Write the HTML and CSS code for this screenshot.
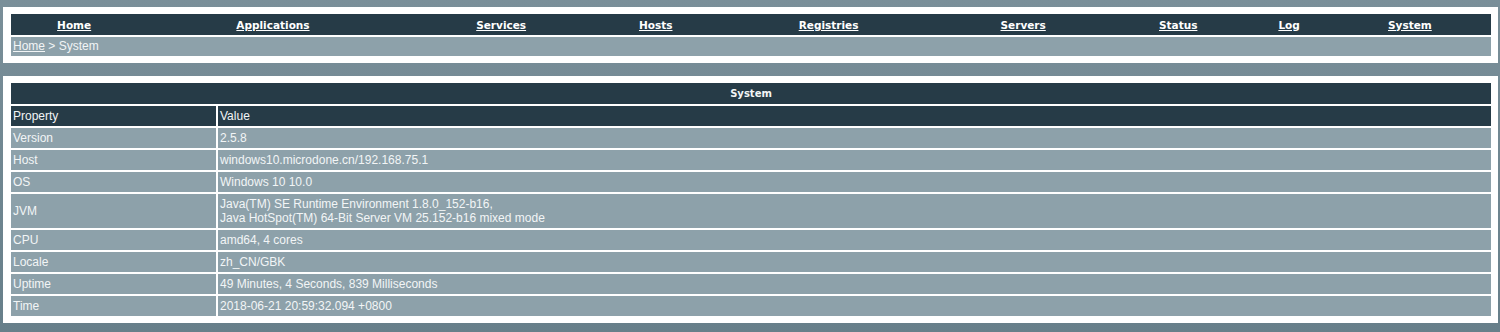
FILE: index.html
```html
<!DOCTYPE html>
<html lang="en">
  <head>
    <meta charset="UTF-8" />
    <title>Dubbo Monitor - System</title>
    <link rel="stylesheet" href="styles.css">
  </head>
  <body>
    <div class="panel">
      <table class="nav">
        <tr class="menu">
          <td><a href="#">Home</a></td>
          <td><a href="#">Applications</a></td>
          <td><a href="#">Services</a></td>
          <td><a href="#">Hosts</a></td>
          <td><a href="#">Registries</a></td>
          <td><a href="#">Servers</a></td>
          <td><a href="#">Status</a></td>
          <td><a href="#">Log</a></td>
          <td><a href="#">System</a></td>
        </tr>
        <tr>
          <td class="crumb" colspan="9"><a href="#">Home</a> &gt; System</td>
        </tr>
      </table>
    </div>

    <div class="panel">
      <table class="list">
        <tr>
          <th class="title" colspan="2">System</th>
        </tr>
        <tr class="head">
          <td class="key">Property</td>
          <td>Value</td>
        </tr>
        <tr><td>Version</td><td>2.5.8</td></tr>
        <tr><td>Host</td><td>windows10.microdone.cn/192.168.75.1</td></tr>
        <tr><td>OS</td><td>Windows 10 10.0</td></tr>
        <tr>
          <td>JVM</td>
          <td>Java(TM) SE Runtime Environment 1.8.0_152-b16,<br />Java HotSpot(TM) 64-Bit Server VM 25.152-b16 mixed mode</td>
        </tr>
        <tr><td>CPU</td><td>amd64, 4 cores</td></tr>
        <tr><td>Locale</td><td>zh_CN/GBK</td></tr>
        <tr><td>Uptime</td><td>49 Minutes, 4 Seconds, 839 Milliseconds</td></tr>
        <tr><td>Time</td><td>2018-06-21 20:59:32.094 +0800</td></tr>
      </table>
    </div>
  </body>
</html>
```

FILE: styles.css
```css
body {
  margin: 0;
  padding: 7px 2px 9px 3px;
  background: linear-gradient(180deg, #7a8f99 0%, #677f8a 100%);
  font-family: "Liberation Sans", Arial, sans-serif;
  font-size: 12px;
  color: #f2f5f6;
}

.panel {
  background: #fff;
  padding: 7px 7px 7px 8px;
  margin-bottom: 13px;
}

.panel:last-child {
  margin-bottom: 0;
}

table {
  width: 100%;
  border-collapse: separate;
  border-spacing: 0;
}

td,
th {
  padding: 0;
}

a {
  color: #fff;
}

/* top menu */
.menu td {
  background: #263b47;
  height: 21px;
  text-align: center;
  font-family: "DejaVu Sans", Verdana, sans-serif;
  font-weight: bold;
  font-size: 10.5px;
}

.crumb {
  background: #8da1aa;
  border-top: 2px solid #fff;
  height: 19px;
  padding-left: 2px;
  line-height: 19px;
}

.crumb a {
  color: #f2f5f6;
}

/* system table */
.list td,
.list th {
  line-height: 14px;
  padding: 3px 2px;
  background: #8da1aa;
  border-top: 2px solid #fff;
  text-align: left;
  vertical-align: middle;
}

.list td + td {
  border-left: 2px solid #fff;
}

.list .title {
  background: #263b47;
  border-top: 0;
  height: 15px;
  text-align: center;
  font-family: "DejaVu Sans", Verdana, sans-serif;
  font-size: 10px;
  font-weight: bold;
}

.list .head td {
  background: #263b47;
}

.key {
  width: 201px;
}
```
